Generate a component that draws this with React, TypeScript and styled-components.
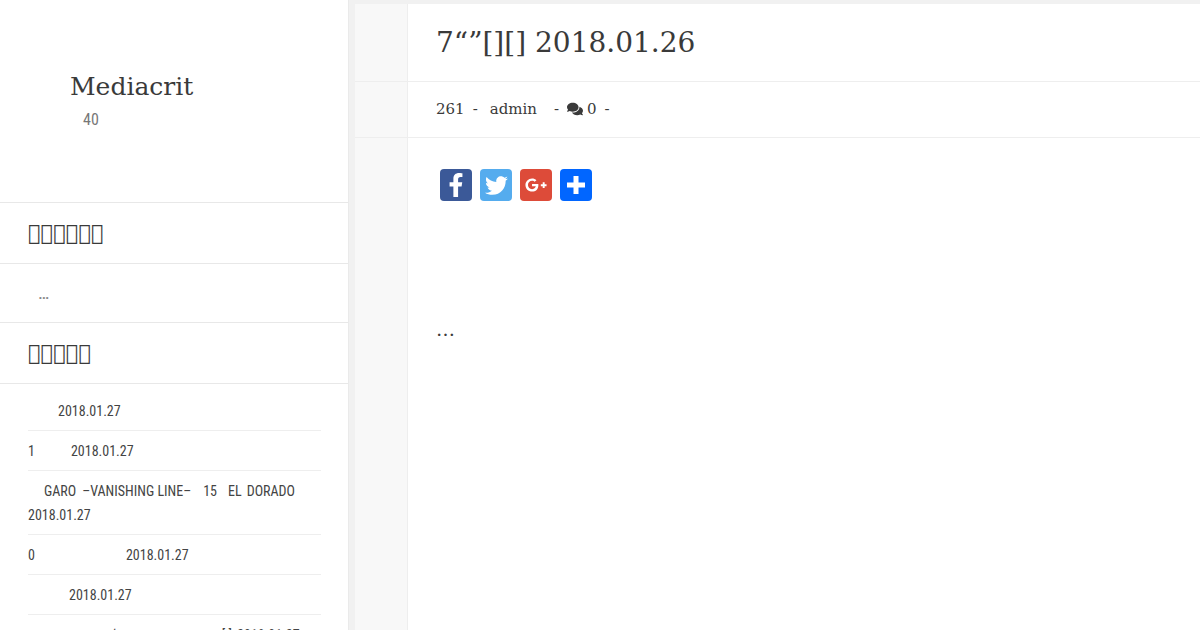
import React from "react";
import styled, { createGlobalStyle } from "styled-components";
import { FaFacebookF, FaTwitter, FaGooglePlusG, FaComments } from "react-icons/fa";

const Global = createGlobalStyle`
  html, body { margin: 0; padding: 0; height: 630px; overflow: hidden; background: #f1f1f1; }
`;
const Page = styled.div`
  display: flex; width: 1200px; height: 630px; overflow: hidden;
  font-family: "DejaVu Serif", serif; color: #3a3a3a;
`;
const Sidebar = styled.aside`
  width: 348px; flex: none; background: #fff; border-right: 1px solid #eaeaea; box-sizing: content-box; overflow: hidden;
`;
const Brand = styled.header`
  height: 203px; box-sizing: border-box; border-bottom: 1px solid #e8e8e8; padding: 70px 0 0 70px;
`;
const SiteName = styled.div`
  font-size: 25px; line-height: 33px;
`;
const SiteSub = styled.div`
  font-family: Roboto, sans-serif; font-stretch: 75%; font-size: 16px; line-height: 24px; color: #777; margin: 5px 0 0 13px;
`;
const WidgetTitle = styled.h3`
  margin: 0; height: 61px; box-sizing: border-box; padding-left: 28px; border-bottom: 1px solid #e8e8e8;
  font-size: 21px; font-weight: 400; line-height: 60px; white-space: pre;
`;
const Excerpt = styled.div`
  height: 59px; box-sizing: border-box; border-bottom: 1px solid #e8e8e8; padding: 17px 0 0 38px;
  font-family: Roboto, sans-serif; font-stretch: 75%; font-size: 19px; line-height: 24px; color: #888;
`;
const List = styled.ul`
  list-style: none; margin: 0; padding: 7px 27px 0 28px;
`;
const Item = styled.li`
  padding: 8px 0 7px; border-bottom: 1px solid #eee; line-height: 24px;
  font-family: Roboto, sans-serif; font-stretch: 75%; font-size: 14px; color: #444;
`;
const Blank = styled.span<{ $w: number }>`
  display: inline-block; width: ${(p) => p.$w}px;
`;
const Main = styled.main`
  flex: 1; margin: 4px 0 0 6px; background: #f8f8f8; min-width: 0;
`;
const Row = styled.div<{ $h: number }>`
  height: ${(p) => p.$h}px; box-sizing: border-box; border-bottom: 1px solid #eee; padding-left: 52px;
`;
const Cell = styled.div`
  height: 100%; background: #fff; border-left: 1px solid #eee; padding-left: 28px; box-sizing: border-box;
`;
const Title = styled.h1`
  margin: 0; font-size: 28px; font-weight: 400; line-height: 77px; white-space: pre;
`;
const Meta = styled.div`
  display: flex; align-items: center; height: 53px; font-size: 15px; white-space: pre;
`;
const MetaIcon = styled(FaComments)`
  width: 16px; height: 16px; margin-right: 4px;
`;
const Body = styled.div`
  height: 500px; background: #fff; margin-left: 52px; border-left: 1px solid #eee; padding: 31px 0 0 32px;
`;
const Share = styled.div`
  display: flex; gap: 8px;
`;
const ShareBtn = styled.a<{ $bg: string }>`
  width: 32px; height: 32px; border-radius: 4px; background: ${(p) => p.$bg}; color: #fff;
  display: flex; align-items: center; justify-content: center;
`;
const Dots = styled.p`
  margin: 113px 0 0 -4px; font-size: 19px; line-height: 30px;
`;

const TOFU6 = "\uE000\uE000\uE000\uE000\uE000\uE000";
const TOFU5 = "\uE000\uE000\uE000\uE000\uE000";

export default function App() {
  return (
    <Page>
      <Global />
      <Sidebar>
        <Brand>
          <SiteName>Mediacrit</SiteName>
          <SiteSub>40</SiteSub>
        </Brand>
        <WidgetTitle>{TOFU6}</WidgetTitle>
        <Excerpt>…</Excerpt>
        <WidgetTitle>{TOFU5}</WidgetTitle>
        <List>
          <Item><Blank $w={30} />2018.01.27</Item>
          <Item>1<Blank $w={36} />2018.01.27</Item>
          <Item><Blank $w={16} />GARO<Blank $w={6} />–VANISHING LINE–<Blank $w={12} />15<Blank $w={11} />EL<Blank $w={5} />DORADO 2018.01.27</Item>
          <Item>0<Blank $w={91} />2018.01.27</Item>
          <Item><Blank $w={41} />2018.01.27</Item>
          <Item><Blank $w={85} />‘<Blank $w={106} />[ ]<Blank $w={5} />2018.01.27</Item>
        </List>
      </Sidebar>
      <Main>
        <Row $h={78}><Cell><Title>7“”[][] 2018.01.26</Title></Cell></Row>
        <Row $h={56}>
          <Cell>
            <Meta>261<Blank $w={8} />-<Blank $w={12} />admin<Blank $w={17} />-<Blank $w={8} /><MetaIcon />0<Blank $w={8} />-</Meta>
          </Cell>
        </Row>
        <Body>
          <Share>
            <ShareBtn $bg="#3b5998"><FaFacebookF size={24} /></ShareBtn>
            <ShareBtn $bg="#55acee"><FaTwitter size={23} /></ShareBtn>
            <ShareBtn $bg="#dd4b39"><FaGooglePlusG size={22} /></ShareBtn>
            <ShareBtn $bg="#0166ff">
              <svg width="18" height="18" viewBox="0 0 18 18"><path fill="#fff" d="M6.5 0h5v6.5H18v5h-6.5V18h-5v-6.5H0v-5h6.5z" /></svg>
            </ShareBtn>
          </Share>
          <Dots>…</Dots>
        </Body>
      </Main>
    </Page>
  );
}
